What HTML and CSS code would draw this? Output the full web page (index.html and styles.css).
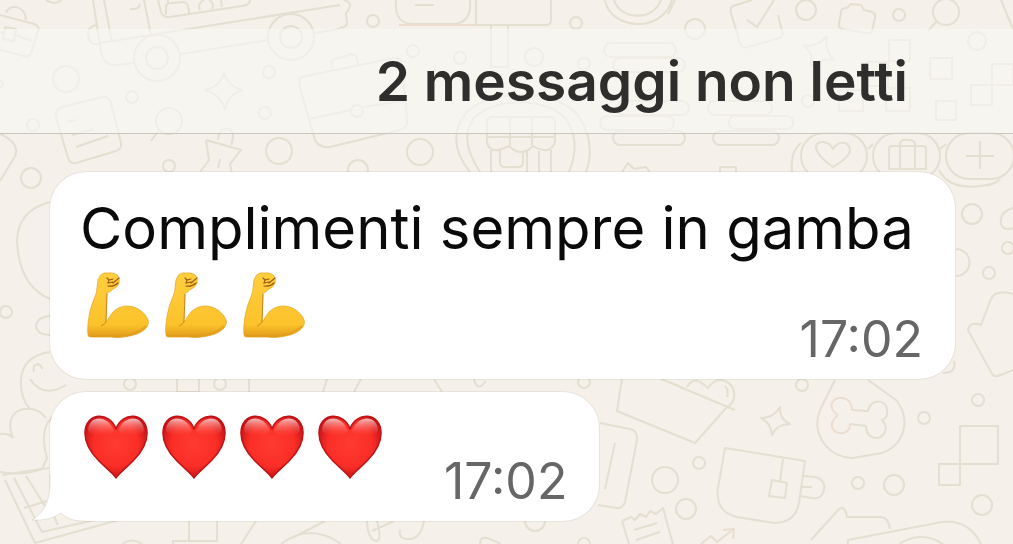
FILE: index.html
```html
<!DOCTYPE html>
<html lang="it">
<head>
  <meta charset="utf-8">
  <meta name="viewport" content="width=device-width, initial-scale=1">
  <title>Chat</title>
  <link rel="stylesheet" href="styles.css">
</head>
<body>
  <!-- doodle wallpaper -->
  <svg class="wallpaper" viewBox="0 0 1013 544" preserveAspectRatio="xMidYMid slice" aria-hidden="true">
    <!-- bag and van -->
    <path d="M0 15L34 24Q40 26 38 31L31 53Q29 58 24 56L0 50M6 13C8 4 25 4 26 20M5 27L16 29L14 41L3 39ZM0 32L3 33M16 35L32 41"/>
    <path d="M46 0Q54 6 62 0M93 0L101 52Q104 66 116 65L134 63M104 0L112 42M100 43L340 5M144 0L151 35M96 25Q87 27 88 36Q90 46 99 44M181 54L268 40M315 33L340 29M130 9Q139 10 140 4"/>
    <path d="M158 0L161 12Q163 18 170 17L242 6Q250 5 250 0M166 15V7Q166 3 171 3L184 2Q189 3 189 14M168 3V0M200 10Q197 3 204 0M212 9Q215 3 209 0M222 7L221 0"/>
    <circle cx="157" cy="58" r="23"/><circle cx="157" cy="58" r="11"/>
    <circle cx="291" cy="37" r="23"/><circle cx="291" cy="37" r="11"/>
    <!-- note, magnifier, star -->
    <path d="M62 107L102 97Q109 96 111 103L121 143Q122 149 116 151L76 163Q70 164 68 158L56 117Q54 110 62 107ZM68 122L76 120M72 135L94 129M76 147L108 136"/>
    <circle cx="169" cy="121" r="13"/><path d="M159 130L151 141"/>
    <path d="M224 73Q229 87 242 90Q228 95 225 109Q220 94 205 90Q220 87 224 73Z"/>
    <path d="M206 140L241 150L230 164L232 174M206 140L209 160L200 172M218 140Q219 127 229 129Q236 132 231 145M220 159L218 168"/>
    <path d="M0 134Q22 144 14 158L0 181"/>
    <!-- first aid bag -->
    <path d="M301 77L394 58Q401 57 402 64L407 119Q408 128 400 130L330 147Q319 148 315 140L300 88Q298 80 301 77ZM309 119L351 110M364 107L402 101M332 68Q330 57 340 58L351 54Q358 54 358 65"/>
    <circle cx="357" cy="111" r="6"/>
    <!-- signpost -->
    <path d="M396 0Q394 24 413 24H455Q472 22 470 0M415 5H434M476 0V25M551 0V20Q551 25 546 25H476M491 25V67H508V25"/>
    <path class="warm" d="M399 25H476"/>
    <path d="M344 0Q355 3 346 13L347 24Q344 29 340 27M605 0C610 30 662 34 672 0M614 0C620 20 653 22 661 0"/>
    <!-- market stall -->
    <path d="M470 172Q444 139 467 112C490 88 560 88 580 118Q596 145 586 172M480 172Q458 139 474 118C495 97 545 97 565 118Q582 140 569 172"/>
    <path d="M491 117H550Q556 117 555 125V142Q550 156 533 146Q521 158 509 146Q490 156 487 142V122Q488 117 491 117ZM487 137H555M510 117V145M532 117V145M491 150V172M551 150V172M500 151V162Q500 167 505 167H518Q523 167 523 162V151M527 151V172M539 151V172"/>
    <!-- stacked pills -->
    <rect x="604" y="43" width="72" height="14" rx="7"/><rect x="613" y="58" width="72" height="14" rx="7"/>
    <rect x="600" y="116" width="74" height="14" rx="7"/><rect x="613" y="131" width="72" height="14" rx="7"/>
    <rect x="617" y="101" width="72" height="14" rx="7"/>
    <rect x="708" y="101" width="64" height="14" rx="7"/><rect x="729" y="116" width="64" height="13" rx="6"/><rect x="713" y="131" width="66" height="14" rx="7"/>
    <path d="M622 172L628 163L634 169L646 167L650 172M720 172V167H736V172"/>
    <!-- checkbox, folder, magnifier -->
    <path d="M752 0L733 6Q730 7 731 13L740 43Q742 49 748 47L779 38Q784 36 782 31L778 15M747 20L757 27L774 0M841 13Q840 8 847 8L851 4L861 5L864 10L872 12Q876 13 875 18L872 31Q871 34 866 33L842 29Q838 28 839 23ZM675 0L668 14M1001 0L1013 29"/>
    <circle cx="946" cy="12" r="13"/><path d="M937 21L928 31"/>
    <path d="M803 45Q817 48 827 36Q824 50 834 60Q821 58 811 66Q814 52 803 45Z"/>
    <!-- squares -->
    <path d="M889 40H910V61H889ZM930 58H952V79H930ZM992 64H1013V85H992ZM971 85H992V105H971ZM936 101H956V120H936ZM839 90H863V111H839ZM886 88H910V111H886ZM867 62H888V86H867Z"/>
    <!-- badges -->
    <rect x="801" y="133" width="66" height="46" rx="23"/><rect x="873" y="133" width="67" height="46" rx="23"/><rect x="946" y="133" width="68" height="46" rx="23"/>
    <path d="M801 143Q790 152 792 172M873 144L868 149M946 144L940 149M939 170Q949 190 980 186Q995 185 1000 179"/>
    <path d="M833 167C813 153 813 143 821 142Q829 141 833 149Q839 140 847 144C855 152 846 159 833 167ZM889 149Q889 146 892 146H923Q926 146 926 149V169H889ZM900 169V144Q901 139 908 140Q915 140 915 144V169M980 141V169M966 156H994"/>
    <!-- right column -->
    <path d="M1013 208Q999 212 1001 224Q1003 231 1013 228M956 249A13 13 0 0 1 956 276M1013 294Q996 289 991 299L981 325Q970 321 968 330L992 374Q994 377 998 376L1013 370M954 361Q957 373 943 373"/>
    <!-- left column -->
    <path d="M50 202Q18 210 17 241Q19 286 50 299M50 316Q37 317 36 326Q37 335 50 335M50 352Q23 356 21 379Q20 398 30 409M30 379Q43 399 66 385M34 372Q32 365 38 364Q42 366 42 369M13 438C7 424 11 411 24 409Q38 407 46 418M13 438Q8 433 0 434M0 472Q20 476 42 469L47 458Q39 430 52 417"/>
    <path d="M2 475L49 468M5 480L35 543L126 518M14 478L42 532L112 516M26 476L45 506M24 508L47 501M58 525L50 508"/>
    <!-- strip between the bubbles -->
    <path d="M177 379V392H199V379M249 379V392M327 379L323 392M361 379L354 392M434 379L442 392M474 379Q477 393 486 381"/>
    <!-- bottom doodles -->
    <path d="M189 521V541H217V521M189 541H173V544M256 521L241 544M122 544Q132 537 142 544M281 544Q310 522 341 544M292 538L325 521M367 521Q368 541 377 541Q382 540 377 521M372 531L394 521M424 521Q421 538 410 539Q398 540 400 530M480 544Q480 535 490 539L501 544"/>
    <path d="M600 423L630 429Q638 431 637 440L625 502Q623 509 616 508L598 505M615 443L605 489M622 521L631 517L635 520L640 514L646 517L650 511L656 514L663 508L673 544M622 521L629 544M634 530L657 523M636 540L660 532"/>
    <!-- envelope with heart -->
    <path d="M622 379L617 411L695 443L727 407M673 384L735 410M687 387Q694 376 703 384L708 388Q714 379 722 380Q736 384 734 398Q732 405 727 407M725 386Q729 390 727 397M661 379L679 386"/>
    <path d="M780 407Q779 419 790 424Q777 424 772 435Q771 423 761 418Q774 418 780 407Z"/>
    <!-- bone tag -->
    <path d="M835 380L820 410C810 437 832 459 853 458L882 453C904 445 912 420 896 400L868 380"/>
    <path class="warm" d="M838 415C826 408 832 396 843 398Q852 400 852 410M838 415C825 426 835 435 844 433Q850 431 850 424"/>
    <path d="M852 410L868 411C870 398 888 399 887 411Q888 418 882 420C891 430 882 438 876 438Q866 437 866 426L850 424"/>
    <!-- mug -->
    <path d="M725 448L805 461L799 503Q795 523 774 523L737 517Q715 512 718 488ZM783 459L780 481M772 480L787 483L785 498L769 496ZM804 476L816 477Q826 481 824 489Q822 500 812 498L800 496M802 487H812"/>
    <!-- squares, mitten, arrow -->
    <path d="M960 426H998V464H960ZM939 464H960V485H939ZM811 540L839 509Q845 505 847 517L881 517Q889 518 890 529M848 544V540L942 522Q969 519 981 544M899 544Q921 530 943 544M701 544L711 536L717 542L734 529"/>
    <path class="warm" d="M723 530L734 529L733 539"/>
    <!-- bubbles -->
    <circle cx="66" cy="79" r="13"/><circle cx="132" cy="97" r="6"/><circle cx="33" cy="125" r="6"/><circle cx="269" cy="72" r="6"/><circle cx="265" cy="113" r="6"/>
    <circle cx="279" cy="151" r="13"/><circle cx="169" cy="166" r="6"/><circle cx="31" cy="178" r="10"/><circle cx="0" cy="84" r="3"/>
    <circle cx="373" cy="21" r="6"/><circle cx="413" cy="51" r="6"/><circle cx="460" cy="58" r="6"/><circle cx="534" cy="57" r="9"/><circle cx="576" cy="23" r="6"/><circle cx="584" cy="64" r="6"/>
    <circle cx="420" cy="152" r="13"/><circle cx="358" cy="170" r="10"/><circle cx="695" cy="29" r="10"/><circle cx="806" cy="10" r="10"/><circle cx="899" cy="15" r="6"/><circle cx="977" cy="41" r="9"/><circle cx="808" cy="101" r="6"/>
    <circle cx="972" cy="214" r="10"/><circle cx="1008" cy="248" r="6"/><circle cx="989" cy="273" r="6"/><circle cx="6" cy="312" r="6"/>
    <circle cx="130" cy="384" r="6"/><circle cx="220" cy="384" r="6"/><circle cx="584" cy="382" r="6"/><circle cx="535" cy="521" r="10"/><circle cx="584" cy="544" r="6"/>
    <circle cx="665" cy="480" r="13"/><circle cx="802" cy="385" r="6"/><circle cx="924" cy="418" r="6"/><circle cx="978" cy="400" r="6"/><circle cx="699" cy="463" r="6"/><circle cx="686" cy="509" r="10"/><circle cx="858" cy="483" r="6"/><circle cx="894" cy="485" r="10"/><circle cx="982" cy="505" r="10"/>
  </svg>

  <!-- emoji artwork -->
  <svg class="sprite" aria-hidden="true">
    <defs>
      <radialGradient id="heart-fill" cx="0.5" cy="0.45" r="0.6">
        <stop offset="0" stop-color="#ff3b31"/>
        <stop offset="0.6" stop-color="#fa2e27"/>
        <stop offset="1" stop-color="#bd0c12"/>
      </radialGradient>
      <linearGradient id="heart-shine" x1="0" y1="0" x2="0" y2="1">
        <stop offset="0" stop-color="#fff" stop-opacity="0.7"/>
        <stop offset="1" stop-color="#ff5a50" stop-opacity="0"/>
      </linearGradient>
      <linearGradient id="arm-fill" x1="0" y1="0" x2="0" y2="1">
        <stop offset="0" stop-color="#ffcf3f"/>
        <stop offset="0.8" stop-color="#fcc22b"/>
        <stop offset="1" stop-color="#e29a1b"/>
      </linearGradient>
      <symbol id="heart" viewBox="0 0 78 76">
        <path fill="url(#heart-fill)" stroke="#bf1519" stroke-width="1.6" stroke-linejoin="round" d="M36 68C34 64 27 59 19 51C11 43 5 33 5 23C5 2 30 1 36 19C42 1 67 2 67 23C67 33 61 43 53 51C45 59 38 64 36 68Z"/>
        <path fill="url(#heart-shine)" d="M8 21C8 5 28 4 34 21Q30 27 20 26Q11 26 8 21ZM64 21C64 5 44 4 38 21Q42 27 52 26Q61 26 64 21Z"/>
      </symbol>
      <symbol id="arm" viewBox="0 0 78 76">
        <path fill="url(#arm-fill)" stroke="#e8a727" stroke-width="0.8" stroke-linejoin="round" d="M8 69C7 61 9 49 11 42C13 34 17 28 17 22L18 14Q20 8 24 7L32 7Q37 8 38 10Q40 13 39 17Q37 22 33 23Q30 26 27 27L26 56C29 53 30 49 33 46C37 42 42 40 47 40C56 40 65 46 68 54C70 60 64 65 57 68C48 71 38 72 31 71L11 71Q8 71 8 69Z"/>
        <path fill="none" stroke="#b8740f" stroke-opacity="0.7" d="M27 28L26 56Q24 59 21 60"/>
        <path fill="none" stroke="#e0991a" stroke-width="2" stroke-opacity="0.6" d="M10 70H32C42 71 58 69 66 60"/>
        <path fill="none" stroke="#9c5c14" stroke-width="1.2" stroke-linecap="round" d="M27 12L29 14L33 13M29 14L28 17L33 16M33 17L39 12M28 20Q34 21 38 17"/>
      </symbol>
    </defs>
  </svg>

  <header class="unread-bar">
    <h1>2 messaggi non letti</h1>
  </header>

  <main class="messages">
    <article class="bubble wide">
      <p class="text">Complimenti sempre in gamba</p>
      <div class="row">
        <div class="emojis" role="img" aria-label="💪💪💪">
          <svg class="emoji"><use href="#arm"/></svg>
          <svg class="emoji"><use href="#arm"/></svg>
          <svg class="emoji"><use href="#arm"/></svg>
        </div>
        <time class="time" datetime="17:02">17:02</time>
      </div>
    </article>
    <article class="bubble">
      <svg class="tail" viewBox="0 0 48 48" aria-hidden="true">
        <path class="tail-fill" d="M18 0C19 22 15 37 0 46Q18 47 29 39Q36 46 48 47V0Z"/>
        <path class="tail-edge" d="M18 0C19 22 15 37 0 46Q18 47 29 39Q36 46 48 47"/>
      </svg>
      <div class="row">
        <div class="emojis" role="img" aria-label="❤️❤️❤️❤️">
          <svg class="emoji"><use href="#heart"/></svg>
          <svg class="emoji"><use href="#heart"/></svg>
          <svg class="emoji"><use href="#heart"/></svg>
          <svg class="emoji"><use href="#heart"/></svg>
        </div>
        <time class="time" datetime="17:02">17:02</time>
      </div>
    </article>
  </main>
</body>
</html>
```

FILE: styles.css
```css
* {
  box-sizing: border-box;
}
body {
  position: relative;
  min-height: 100vh;
  margin: 0;
  padding-top: 29px;
  overflow: hidden;
  font-family: Inter, "Open Sans", sans-serif;
  background: #f5f0e9;
}

/* wallpaper */
.wallpaper {
  position: absolute;
  inset: 0;
  z-index: -1;
  width: 100%;
  height: 100%;
  fill: none;
  stroke: #e3dfd1;
  stroke-width: 2;
  stroke-linejoin: round;
}
.wallpaper .warm { stroke: #ecddd0; }
.sprite {
  position: absolute;
  width: 0;
  height: 0;
}

/* header */
.unread-bar {
  padding-right: 105px;
  text-align: right;
  background: rgba(249, 249, 245, 0.6);
  border-bottom: 1px solid #c9c6c0;
}
.unread-bar h1 {
  margin: 0;
  font-size: 55px;
  line-height: 104px;
  font-weight: 600;
  color: #2f2e2c;
}

/* messages */
.messages {
  display: flex;
  flex-direction: column;
  align-items: flex-start;
  gap: 13px;
  padding: 38px 58px 23px 50px;
}
.bubble {
  position: relative;
  padding: 18px 32px 12px 30px;
  background: #fff;
  border-radius: 36px;
  box-shadow: 0 0 0 1px rgba(90, 80, 60, 0.08);
}
.bubble.wide {
  align-self: stretch;
}
.text {
  margin: 0;
  font-size: 58px;
  line-height: 76px;
  color: #0a0a0a;
}
.row {
  display: flex;
  justify-content: space-between;
  gap: 52px;
  min-height: 99px;
}
.wide .row {
  min-height: 101px;
}
.emojis {
  display: flex;
}
.emoji {
  width: 78px;
  height: 76px;
}
.time {
  align-self: flex-end;
  font-size: 50px;
  line-height: 56px;
  color: #666;
}
.tail {
  position: absolute;
  left: -18px;
  bottom: -1px;
  width: 48px;
  height: 48px;
}
.tail-fill { fill: #fff; }
.tail-edge {
  fill: none;
  stroke: rgba(90, 80, 60, 0.12);
}
```
